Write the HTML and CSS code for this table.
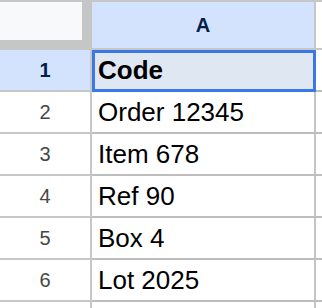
FILE: index.html
```html
<!DOCTYPE html>
<html>
<head>
<meta charset="utf-8">
<link rel="stylesheet" href="styles.css">
</head>
<body>
<div class="sheet">
  <div class="corner"><div class="corner-box"></div></div>
  <div class="col-head active">A</div>
  <div class="col-head blank"></div>

  <div class="row-head active">1</div>
  <div class="cell selected"><b>Code</b></div>
  <div class="cell blank"></div>

  <div class="row-head">2</div>
  <div class="cell">Order 12345</div>
  <div class="cell blank"></div>

  <div class="row-head">3</div>
  <div class="cell">Item 678</div>
  <div class="cell blank"></div>

  <div class="row-head">4</div>
  <div class="cell">Ref 90</div>
  <div class="cell blank"></div>

  <div class="row-head">5</div>
  <div class="cell">Box 4</div>
  <div class="cell blank"></div>

  <div class="row-head">6</div>
  <div class="cell">Lot 2025</div>
  <div class="cell blank"></div>

  <div class="row-head stub"></div>
  <div class="cell stub"></div>
  <div class="cell blank stub"></div>
</div>
</body>
</html>
```

FILE: styles.css
```css
* { box-sizing: border-box; }
html, body { margin: 0; padding: 0; background: #fff; }
body { width: 322px; height: 308px; overflow: hidden; font-family: "Liberation Sans", Arial, sans-serif; }

.sheet {
  display: grid;
  grid-template-columns: 92px 224px 1fr;
  grid-template-rows: 50px repeat(6, 42px) 6px;
}

.corner {
  background: #c4c7c5;
  padding-top: 2px;
}
.corner-box {
  width: 82px;
  height: 38px;
  background: #f8f9fa;
}

.col-head {
  border-top: 2px solid #c7c7c7;
  border-bottom: 2px solid #c7c7c7;
  border-right: 2px solid #c7c7c7;
  display: flex;
  align-items: center;
  justify-content: center;
  font-size: 20px;
  font-weight: bold;
  color: #041e49;
  background: #fff;
}
.col-head.active { background: #d3e3fd; }
.col-head.blank { border-right: none; }

.row-head {
  border-right: 2px solid #c7c7c7;
  border-bottom: 2px solid #c7c7c7;
  display: flex;
  align-items: center;
  justify-content: center;
  font-size: 20px;
  color: #444746;
  background: #fff;
}
.row-head.active {
  background: #d3e3fd;
  color: #041e49;
  font-weight: bold;
}

.cell {
  border-right: 2px solid #c4c4c4;
  border-bottom: 2px solid #bdbdbd;
  font-size: 26px;
  line-height: 40px;
  padding-left: 6px;
  color: #000;
  white-space: nowrap;
}
.cell.blank { border-right: none; padding: 0; }
.stub { border-bottom: none; overflow: hidden; }

.cell.selected {
  position: relative;
  background: #dfe7f3;
}
.cell.selected::after {
  content: "";
  position: absolute;
  left: 0;
  top: 0;
  right: -2px;
  bottom: -2px;
  border: 3px solid #3b78e7;
}
```
